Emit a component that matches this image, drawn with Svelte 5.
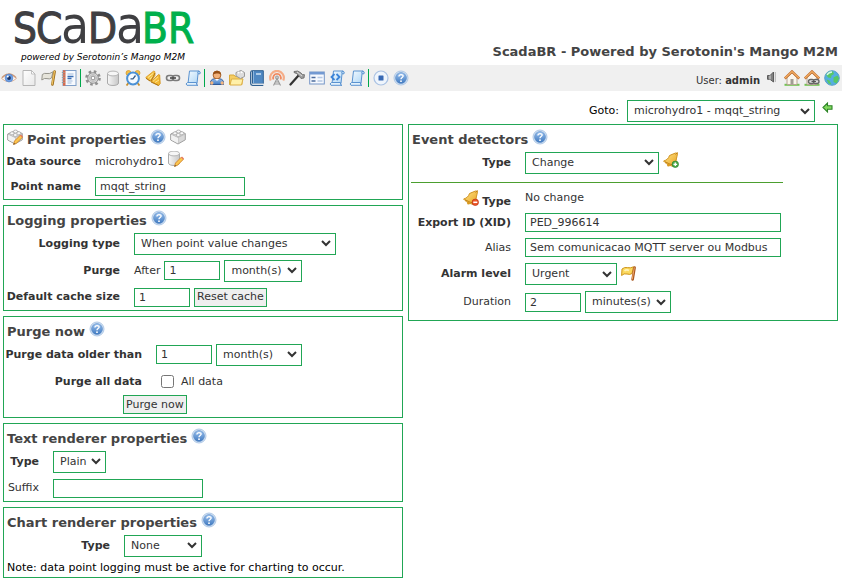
<script>
  const tools = [
    ['eye', 'page', 'flag-gray', 'notebook'],
    ['gear', 'cylinder', 'clock', 'horn', 'link', 'scroll'],
    ['user', 'folder', 'book', 'antenna', 'hammer', 'form', 'script', 'scroll'],
    ['stop', 'help']
  ];
  let pointName = $state('mqqt_string');
  let purgeAll = $state(false);
</script>

{#snippet icon(name)}
  <svg class="icon" viewBox="0 0 16 16" aria-hidden="true"><use href={'#' + name} /></svg>
{/snippet}

{#snippet title(text)}
  <div class="title">
    <h2>{text}</h2>
    <button class="ib raised" aria-label="Help">{@render icon('help')}</button>
  </div>
{/snippet}

<svg class="defs" aria-hidden="true">
  <defs>
    <linearGradient id="gold" x1="0" y1="0" x2="1" y2="1"><stop offset="0" stop-color="#ffe68a" /><stop offset="1" stop-color="#e8a01c" /></linearGradient>
    <linearGradient id="blue" x1="0" y1="0" x2="0" y2="1"><stop offset="0" stop-color="#9cc2ee" /><stop offset="1" stop-color="#3f79c0" /></linearGradient>
    <linearGradient id="paper" x1="0" y1="0" x2="1" y2="1"><stop offset="0" stop-color="#fff" /><stop offset="1" stop-color="#e8e8e8" /></linearGradient>
    <linearGradient id="sky" x1="0" y1="0" x2="1" y2="1"><stop offset="0" stop-color="#f2faff" /><stop offset="1" stop-color="#a9d3f5" /></linearGradient>
    <linearGradient id="metal" x1="0" y1="0" x2="1" y2="0"><stop offset="0" stop-color="#f8f8f8" /><stop offset="1" stop-color="#c6c6c6" /></linearGradient>
  </defs>

  <symbol id="eye" viewBox="0 0 16 16">
    <path d="M.5 8.500Q8 .8 15.500 8.500Q8 15 .5 8.500z" fill="#fbf6f2" stroke="#dfb59b" />
    <path d="M.8 7.600Q8 .4 15.200 7.600" fill="none" stroke="#c99778" stroke-width="1.200" />
    <circle cx="8" cy="8" r="3.900" fill="#6d9fe4" stroke="#4f7fca" stroke-width=".6" />
    <circle cx="8" cy="8" r="1.900" fill="#1d3566" /><circle cx="6.800" cy="6.600" r="1" fill="#fff" />
  </symbol>
  <symbol id="page" viewBox="0 0 16 16">
    <path d="M2 .5h8.500l3.500 3.500v11.500H2z" fill="url(#paper)" stroke="#b5b5b5" />
    <path d="M10.500 .5v3.500H14z" fill="#fff" stroke="#b5b5b5" stroke-width=".8" />
  </symbol>
  <symbol id="flag-gray" viewBox="0 0 16 16">
    <path d="M1.300 4.500Q3.500 2.800 6 3.500T12 1.800L10.500 8Q8.500 9.500 6 8.600T.8 10z" fill="#e6e4da" stroke="#96958c" />
    <path d="M13.600 1.500L11.400 14.500" stroke="#9c6c18" stroke-width="2.600" stroke-linecap="round" /><path d="M13.400 1.500L11.200 14.200" stroke="#ecc063" stroke-width="1.300" stroke-linecap="round" />
  </symbol>
  <symbol id="flag-gold" viewBox="0 0 16 16">
    <path d="M1 3Q3.500 .8 6.500 1.600T12.500 .8L11 7.500Q9 9 6 8T.6 9.500z" fill="#fbd95f" stroke="#cf961a" />
    <path d="M3.500 5Q5.500 3 8 4.500" stroke="#fff3b8" fill="none" stroke-width="1.500" />
    <path d="M13.600 1.500L11.600 13.500" stroke="#a8561f" stroke-width="2.600" stroke-linecap="round" /><path d="M13.300 1.800L11.300 13" stroke="#f2a869" stroke-linecap="round" />
  </symbol>
  <symbol id="notebook" viewBox="0 0 16 16">
    <rect x="2" y=".5" width="13" height="15" fill="#f7fafe" stroke="#7f9fc8" />
    <path d="M2 .3h2.500v15.400H2z" fill="#d9694b" />
    <path d="M.8 2.500h3M.8 5h3M.8 7.500h3M.8 10h3M.8 12.500h3" stroke="#999" stroke-width=".9" />
    <path d="M6.500 4h6M6.500 11h5M6.500 13h4" stroke="#a2bbdb" /><path d="M6.500 6.500h6M6.500 8.500h4" stroke="#3b6fb5" stroke-width="1.600" />
  </symbol>
  <symbol id="gear" viewBox="0 0 16 16">
    <circle cx="8" cy="8" r="6.300" fill="none" stroke="#8f8f8f" stroke-width="3" stroke-dasharray="2.450 2.498" />
    <circle cx="8" cy="8" r="5.300" fill="#dadada" stroke="#959595" /><circle cx="8" cy="8" r="3.500" fill="none" stroke="#bdbdbd" />
    <circle cx="8" cy="8" r="1.900" fill="#fff" stroke="#909090" />
  </symbol>
  <symbol id="cylinder" viewBox="0 0 16 16">
    <path d="M2.500 3.500v9.500c0 3.300 11 3.300 11 0V3.500z" fill="url(#metal)" stroke="#aaa" />
    <ellipse cx="8" cy="3.500" rx="5.500" ry="2.400" fill="#f6f6f6" stroke="#b5b5b5" />
  </symbol>
  <symbol id="clock" viewBox="0 0 16 16">
    <path d="M3.500 13l-2 2.500M12.500 13l2 2.500" stroke="#c78f2c" stroke-width="1.800" />
    <circle cx="3.500" cy="3" r="2.500" fill="#f4be45" stroke="#d39a33" stroke-width=".8" /><circle cx="12.500" cy="3" r="2.500" fill="#f4be45" stroke="#d39a33" stroke-width=".8" />
    <circle cx="8" cy="8.500" r="5.900" fill="#f4faff" stroke="#4b91d6" stroke-width="2" />
    <path d="M10.500 5.500L8 8.800H5.500" fill="none" stroke="#365b86" stroke-width="1.300" />
  </symbol>
  <symbol id="horn" viewBox="0 0 16 16">
    <path d="M.7 7.500L8.500 1.200 9.800 1.500 10 5.500 6.500 10.500 5 11z" fill="#f5c344" stroke="#d9961a" stroke-width=".8" />
    <path d="M3 7.500L8 3.500M5 9l3.500-3" stroke="#ffe89a" />
    <path d="M6 11.500L13.700 4.500l1 .5.500 8.500-1.500 2z" fill="#f3b935" stroke="#d18c12" stroke-width=".8" />
    <path d="M8 11.300l5-4.500M10 12.500l4-2.500" stroke="#ffe28a" />
    <path d="M10 3L6 11M1 8.300l4.500 3M6 12l7.500 3.500" stroke="#a86c0a" stroke-width=".9" />
  </symbol>
  <symbol id="link" viewBox="0 0 16 16">
    <rect x="1.500" y="5.500" width="7" height="5" rx="2.500" fill="none" stroke="#7b7b7b" stroke-width="1.600" /><rect x="7.500" y="5.500" width="7" height="5" rx="2.500" fill="none" stroke="#7b7b7b" stroke-width="1.600" />
    <path d="M5 8h6" stroke="#4a4a4a" stroke-width="1.600" />
  </symbol>
  <symbol id="scroll" viewBox="0 0 16 16">
    <path d="M4.500 1h9.500q1.800.5 1 2.800h-2L12 13.500H3z" fill="url(#sky)" stroke="#5b93d0" />
    <path d="M13 3.800q-1-2.500 1-2.800" fill="none" stroke="#5b93d0" /><path d="M2.500 12.500h9q-.5 2.800 1.500 2.800H2Q-.2 14 2.500 12.500z" fill="#e2f1fc" stroke="#5b93d0" />
  </symbol>
  <symbol id="script" viewBox="0 0 16 16">
    <use href="#scroll" /><path d="M5.500 4L2.500 7l3 3M7.500 4l3 3-3 3" fill="none" stroke="#3b84d8" stroke-width="1.800" />
  </symbol>
  <symbol id="user" viewBox="0 0 16 16">
    <path d="M1.500 14.500V12Q2 8.500 8 8.500T14.500 12v2.500z" fill="url(#blue)" stroke="#2e5a99" /><circle cx="2.800" cy="13" r="1.700" fill="#f2b581" /><circle cx="13.200" cy="13" r="1.700" fill="#f2b581" />
    <circle cx="8" cy="5" r="3.900" fill="#f2b27b" stroke="#aa6228" /><path d="M4 4.600C4-.5 12-.5 12 4.600 10 3.700 8 2.700 4 4.600z" fill="#965016" />
    <path d="M6 9l2 2 2-2z" fill="#fff" />
  </symbol>
  <symbol id="folder" viewBox="0 0 16 16">
    <path d="M.5 14.500V5h4.500l1.200 1.500H13v8z" fill="#f5cd63" stroke="#d9aa3a" /><path d="M1 15l1.500-6H14l-1.500 6z" fill="#fff0a9" stroke="#dcae45" />
    <path d="M7 2.500l5-2 3.500 2v4l-4 2L7 6z" fill="#dcdcdc" stroke="#9a9a9a" /><circle cx="9.500" cy="2.500" r="1" fill="#fff" /><circle cx="12.700" cy="2.300" r="1" fill="#fff" />
  </symbol>
  <symbol id="book" viewBox="0 0 16 16">
    <path d="M3.500.7h10.800v12.800H3.500z" fill="#4f88c2" stroke="#2f6091" /><path d="M3.500.7Q1.700.8 1.700 2.500v11q0 1.800 1.800 1.800h10.800" fill="none" stroke="#2f6091" stroke-width="1.300" />
    <path d="M3.500 13.500h10.800v1H3.500z" fill="#eef4fa" /><path d="M4.500 1v12" stroke="#8bb6e0" /><path d="M7 4h5" stroke="#cfe3f5" stroke-width="1.500" />
  </symbol>
  <symbol id="antenna" viewBox="0 0 16 16">
    <path d="M1.800 10.500a6.800 6.800 0 1 1 12.400 0" fill="none" stroke="#f5ad88" stroke-width="2.200" /><path d="M4.500 9.500a3.900 3.900 0 1 1 7 0" fill="none" stroke="#f08a5f" stroke-width="1.700" />
    <circle cx="8" cy="7.500" r="1.600" fill="#c4c4c4" stroke="#888" stroke-width=".7" /><path d="M8 8.500l-3.500 7M8 8.500l3.500 7M6.500 12h3M5.300 14h5.400" fill="none" stroke="#999" stroke-width="1.100" />
  </symbol>
  <symbol id="hammer" viewBox="0 0 16 16">
    <path d="M9.500 5.500L1.500 14.500" stroke="#333" stroke-width="2.200" stroke-linecap="round" /><path d="M5 1.500Q9-.2 12 3l1.500 1.500 2 .2L15 8l-3 .5-2-2.500Q8 3 5 2.500z" fill="#9d9d9d" stroke="#666" stroke-width=".8" /><path d="M8 2l5 4" stroke="#ddd" />
  </symbol>
  <symbol id="form" viewBox="0 0 16 16">
    <rect x=".7" y="2" width="14.600" height="12" fill="#f6f9fe" stroke="#7595c6" /><path d="M1 2h14v2.500H1z" fill="#7299d2" />
    <path d="M2.500 7.500h4M2.500 11h4" stroke="#4d6d9f" stroke-width="1.700" /><path d="M8.500 7.500h5M8.500 11h5" stroke="#b4c8e4" stroke-width="1.700" />
  </symbol>
  <symbol id="stop" viewBox="0 0 16 16"><circle cx="8" cy="8" r="7" fill="#eff5fc" stroke="#aac2e3" stroke-width="1.200" /><rect x="5.500" y="5.500" width="5" height="5" rx=".5" fill="#3769b4" /></symbol>
  <symbol id="help" viewBox="0 0 16 16">
    <circle cx="8" cy="8" r="7" fill="#dce9f7" stroke="#9dbbe0" stroke-width=".8" /><circle cx="8" cy="8" r="5.500" fill="url(#blue)" stroke="#4d80be" stroke-width=".5" />
    <path d="M5.900 6.500Q6 4.600 8.100 4.600 10.200 4.700 10.100 6.300C10 7.500 8 7.500 8 9.200" fill="none" stroke="#fff" stroke-width="1.400" /><circle cx="8" cy="11.200" r=".9" fill="#fff" />
  </symbol>
  <symbol id="sound" viewBox="0 0 16 16"><path d="M3.500 5.500h2.500L9.500 2v10L6 9.300H3.500z" fill="#828282" stroke="#5b5b5b" /><path d="M11.300 2v10" stroke="#b5b5b5" /><path d="M6 5.500v4" stroke="#ddd" /></symbol>
  <symbol id="home" viewBox="0 0 16 16">
    <path d="M.5 14.800h15" stroke="#72c352" stroke-width="2" /><path d="M3 7.500L8 3l5 4.500v7H3z" fill="#fbf5ed" stroke="#b6a692" />
    <path d="M.8 8.500L8 1.500l7.200 7" fill="none" stroke="#c06f30" stroke-width="2.500" /><path d="M1 8L8 1.500 15 8" fill="none" stroke="#f3ad63" stroke-width="1.200" /><rect x="6.500" y="9" width="3" height="5.500" fill="#a29d94" />
  </symbol>
  <symbol id="home-link" viewBox="0 0 16 16">
    <use href="#home" /><rect x="4.500" y="9.500" width="5.500" height="4" rx="2" fill="#ddd" stroke="#666" stroke-width="1.400" /><rect x="9.500" y="9.500" width="5.500" height="4" rx="2" fill="#ddd" stroke="#666" stroke-width="1.400" /><path d="M7.500 11.500h4.500" stroke="#555" />
  </symbol>
  <symbol id="globe" viewBox="0 0 16 16">
    <circle cx="8" cy="8" r="7.300" fill="#54aee1" stroke="#5aa0c8" /><path d="M2 4.500Q5 .5 9 1.500L10 4 7.500 5.500 7 8 4 7.500zM9.500 7.500l4-2 1.500 3-2.500 5-3-1.500zM2.500 9.500l3 1 2 4-3-1z" fill="#57c864" /><path d="M3 5Q5 2 8 2" stroke="#d6f5ee" stroke-width="1.300" fill="none" />
  </symbol>
  <symbol id="back" viewBox="0 0 16 16"><path d="M1 7.500L5.500 3v2.700H10v3.600H5.500V12z" fill="#83d95f" stroke="#2d8427" stroke-width="1.100" /></symbol>
  <symbol id="brick" viewBox="0 0 16 16">
    <path d="M.7 5L8.500 1.500l6.800 3v6.300L8 15 .7 11z" fill="#d9d9d9" stroke="#9f9f9f" /><path d="M1 5.300L8 8.500 15 5M8 8.500v6" fill="none" stroke="#bbb" /><path d="M1.200 5.800L8 9v5.300L1.200 10.700z" fill="#f2f2f2" />
    <g fill="#f8f8f8" stroke="#a6a6a6" stroke-width=".7"><ellipse cx="5" cy="4.300" rx="2" ry="1.500" /><ellipse cx="8.500" cy="2.500" rx="2" ry="1.500" /><ellipse cx="8.300" cy="6" rx="2" ry="1.500" /><ellipse cx="11.800" cy="4.200" rx="2" ry="1.500" /></g>
  </symbol>
  <symbol id="pencil" viewBox="0 0 16 16"><path d="M6.500 15.500l1-3.500 6-6 2 2.200-6 6z" fill="#fcc64e" stroke="#cf842c" stroke-width=".9" /><path d="M6.500 15.500l.5-1.500 1 1z" fill="#333" /><path d="M13 6.500l1-1 2 2-1 1z" fill="#e87c65" /></symbol>
  <symbol id="brick-edit" viewBox="0 0 16 16"><use href="#brick" /><use href="#pencil" /></symbol>
  <symbol id="source-edit" viewBox="0 0 16 16"><use href="#cylinder" x="-2" y="-1" /><use href="#pencil" /></symbol>
  <symbol id="bell" viewBox="0 0 16 16">
    <path d="M.6 9C4 8 5.500 6.500 6.500 3.500L12.500 1l2 .2-.5 3C13 8 12.800 11 12.500 14.500 9 14.500 4 13 .6 9z" fill="url(#gold)" stroke="#cf9220" /><path d="M2 9.700Q7 13 12 13M12.500 2.500l2-2" fill="none" stroke="#c0821a" /><circle cx="5.500" cy="13" r="1.500" fill="#d9981f" />
  </symbol>
  <symbol id="bell-add" viewBox="0 0 16 16"><use href="#bell" /><circle cx="12.300" cy="12.300" r="3.200" fill="#4fae4c" stroke="#2d7d2b" stroke-width=".7" /><path d="M10.500 12.300h3.600M12.300 10.500v3.600" stroke="#fff" stroke-width="1.300" /></symbol>
  <symbol id="bell-remove" viewBox="0 0 16 16"><use href="#bell" /><circle cx="12.300" cy="12.300" r="3.200" fill="#ee572a" stroke="#b73210" stroke-width=".7" /><path d="M10.300 12.300h4" stroke="#fff" stroke-width="1.500" /></symbol>
</svg>

<header>
  <div class="brand">
    <svg class="logo" viewBox="0 0 190 37" role="img" aria-label="ScadaBR">
      <text y="34"><tspan x="0 23">SC</tspan><tspan class="low" x="48">a</tspan><tspan x="75">D</tspan><tspan class="low" x="103">a</tspan><tspan class="green" x="129 155">BR</tspan></text>
    </svg>
    <div class="tagline">powered by Serotonin’s Mango M2M</div>
  </div>
  <h1>ScadaBR - Powered by Serotonin's Mango M2M</h1>
</header>

<nav>
  <div class="tools">
    {#each tools as group}
      <div class="group">
        {#each group as name}<a href="#{name}" aria-label={name}>{@render icon(name)}</a>{/each}
      </div>
    {/each}
  </div>
  <div class="session">
    <span class="who">User: <b>admin</b></span>
    {#each ['sound', 'home', 'home-link', 'globe'] as name}
      <button class="ib" aria-label={name}>{@render icon(name)}</button>
    {/each}
  </div>
</nav>

<main>
  <div class="goto">
    <label for="goto">Goto:</label>
    <select id="goto" class="w188"><option>microhydro1 - mqqt_string</option></select>
    <button class="ib" aria-label="Previous point">{@render icon('back')}</button>
  </div>

  <div class="columns">
    <div class="column">
      <section class="point">
        <div class="title">
          {@render icon('brick-edit')}
          <h2>Point properties</h2>
          <button class="ib raised" aria-label="Help">{@render icon('help')}</button>
          <button class="ib raised" aria-label="Point details">{@render icon('brick')}</button>
        </div>
        <div class="row"><span class="lbl">Data source</span><div class="field"><span>microhydro1</span><button class="ib raised" aria-label="Edit data source">{@render icon('source-edit')}</button></div></div>
        <div class="row"><label class="lbl" for="pname">Point name</label><div class="field"><input id="pname" class="w150" bind:value={pointName} /></div></div>
      </section>

      <section class="logging">
        {@render title('Logging properties')}
        <div class="row"><label class="lbl" for="ltype">Logging type</label><div class="field"><select id="ltype" class="w202"><option>When point value changes</option></select></div></div>
        <div class="row"><label class="lbl" for="pafter">Purge</label><div class="field"><span>After</span><input id="pafter" class="w56" value="1" /><select aria-label="Purge period" class="w78"><option>month(s)</option></select></div></div>
        <div class="row last"><label class="lbl" for="cache">Default cache size</label><div class="field"><input id="cache" class="w56" value="1" /><button class="btn">Reset cache</button></div></div>
      </section>

      <section class="purge">
        {@render title('Purge now')}
        <div class="row"><label class="lbl" for="older">Purge data older than</label><div class="field"><input id="older" class="w56" value="1" /><select aria-label="Older than period" class="w86"><option>month(s)</option></select></div></div>
        <div class="row"><span class="lbl">Purge all data</span><div class="field"><input type="checkbox" id="all" bind:checked={purgeAll} /><label for="all">All data</label></div></div>
        <div class="action"><button class="btn">Purge now</button></div>
      </section>

      <section class="text">
        {@render title('Text renderer properties')}
        <div class="row"><label class="lbl" for="ttype">Type</label><div class="field"><select id="ttype" class="w53"><option>Plain</option></select></div></div>
        <div class="row last"><label class="lbl plain" for="suffix">Suffix</label><div class="field"><input id="suffix" class="w150" /></div></div>
      </section>

      <section class="chart">
        {@render title('Chart renderer properties')}
        <div class="row"><label class="lbl" for="ctype">Type</label><div class="field"><select id="ctype" class="w78"><option>None</option></select></div></div>
        <p>Note: data point logging must be active for charting to occur.</p>
      </section>
    </div>

    <section class="events">
      {@render title('Event detectors')}
      <div class="row"><label class="lbl" for="etype">Type</label><div class="field"><select id="etype" class="w134"><option>Change</option></select><button class="ib raised" aria-label="Add detector">{@render icon('bell-add')}</button></div></div>
      <hr />
      <div class="row short"><span class="lbl withicon"><button class="ib" aria-label="Remove detector">{@render icon('bell-remove')}</button><span>Type</span></span><div class="field">No change</div></div>
      <div class="row short"><label class="lbl" for="xid">Export ID (XID)</label><div class="field"><input id="xid" class="w256" value="PED_996614" /></div></div>
      <div class="row short"><label class="lbl plain" for="alias">Alias</label><div class="field"><input id="alias" class="w256" value="Sem comunicacao MQTT server ou Modbus" /></div></div>
      <div class="row tall"><label class="lbl" for="level">Alarm level</label><div class="field"><select id="level" class="w92"><option>Urgent</option></select>{@render icon('flag-gold')}</div></div>
      <div class="row tall"><label class="lbl plain" for="dur">Duration</label><div class="field"><input id="dur" class="w56" value="2" /><select aria-label="Duration unit" class="w86"><option>minutes(s)</option></select></div></div>
    </section>
  </div>
</main>

<style>
  :global(body) { margin: 0; background: #fff; color: #333; font: 11px/14px Verdana, "DejaVu Sans", sans-serif; }
  * { box-sizing: border-box; }
  .defs { position: absolute; width: 0; height: 0; }
  .icon { display: block; width: 16px; height: 16px; flex: none; }

  header { display: flex; justify-content: space-between; align-items: flex-end; height: 65px; padding: 0 4px 0 13px; }
  .logo { display: block; width: 190px; height: 37px; overflow: visible; }
  .logo text { font-family: "DejaVu Sans Condensed", "DejaVu Sans", sans-serif; font-size: 42px; fill: #3f3f42; stroke: #3f3f42; stroke-width: 1; }
  .logo .low { font-size: 51px; stroke-width: 0; }
  .logo .green { fill: #00b04c; stroke: #00b04c; }
  .tagline { margin: 4px 0 1px 8px; font-size: 9px; line-height: 14px; font-style: italic; color: #000; white-space: nowrap; }
  h1 { margin: 0; padding-bottom: 4px; font-size: 13px; line-height: 18px; color: #444; white-space: nowrap; }

  nav { display: flex; justify-content: space-between; height: 26px; padding: 5px 2px 0 1px; background: #f0f0f0; }
  .tools, .group, .session { display: flex; }
  .group { gap: 4px; align-items: flex-start; }
  .group + .group { position: relative; margin-left: 3px; padding-left: 5px; }
  .group + .group::before { content: ""; position: absolute; left: 0; top: -1px; width: 1px; height: 18px; background: #00a84c; }
  .session { gap: 4px; align-items: flex-start; }
  .who { padding-top: 4px; font-size: 10px; line-height: 14px; white-space: nowrap; }
  .ib { display: block; padding: 0; border: 0; background: none; flex: none; }

  main { padding: 9px 4px 5px 3px; }
  .goto { display: flex; justify-content: flex-end; align-items: center; gap: 8px; height: 22px; margin-bottom: 2px; color: #000; }
  .goto .ib { margin: 0 0 6px -1px; }
  .columns { display: grid; grid-template-columns: 400fr 430fr; gap: 5px; align-items: start; }
  .column { display: grid; gap: 5px; min-width: 0; }

  section { border: 1px solid #21a655; }
  .title { display: flex; align-items: center; gap: 4px; height: 24px; padding: 5px 3px 0; }
  h2 { margin: 0; font-size: 13px; line-height: 18px; color: #444; white-space: nowrap; }
  .raised { padding-bottom: 6px; }
  .title > .icon { margin-bottom: 5px; }
  .row { display: grid; grid-template-columns: var(--label) 1fr; gap: 14px; align-items: center; height: 27px; padding: 0 3px; }
  .last { height: 26px; }
  .short, .point .row { height: 25px; }
  .tall { height: 28px; }
  .lbl { font-weight: bold; text-align: right; white-space: nowrap; justify-self: end; }
  .plain { font-weight: normal; }
  .withicon { display: flex; align-items: center; gap: 3px; }
  .withicon span { padding-top: 8px; }
  .field { display: flex; align-items: center; gap: 4px; white-space: nowrap; }

  .point { --label: 74px; }
  .logging { --label: 113px; }
  .purge { --label: 135px; }
  .text { --label: 32px; }
  .chart { --label: 103px; }
  .events { --label: 99px; padding-bottom: 4px; }
  .action { padding: 0 0 3px 119px; }

  input, select, .btn { margin: 0; border: 1px solid #21a655; border-radius: 0; color: #333; background: #fff; font: inherit; }
  input { height: 19px; padding: 1px 4px; }
  input[type="checkbox"] { width: 13px; height: 13px; margin: 0 3px 0 5px; padding: 0; }
  select {
    height: 22px; padding: 0 6px; appearance: none;
    background: #fff url("data:image/svg+xml,%3Csvg xmlns='http://www.w3.org/2000/svg' width='10' height='7'%3E%3Cpath d='M1 1l4 4 4-4' fill='none' stroke='%23333' stroke-width='2'/%3E%3C/svg%3E") no-repeat right 4px center;
  }
  .btn { display: block; height: 19px; padding: 0 2px; background: #efefef; }
  .w53 { width: 53px; } .w56 { width: 56px; } .w78 { width: 78px; } .w86 { width: 86px; } .w92 { width: 92px; }
  .w134 { width: 134px; } .w150 { width: 150px; } .w188 { width: 188px; } .w202 { width: 202px; } .w256 { width: 256px; }
  hr { width: 372px; margin: 6px 0 2px 2px; border: 0; border-top: 1px solid #4c9f2f; }
  p { margin: 0; padding: 2px 3px; color: #000; white-space: nowrap; }
</style>
